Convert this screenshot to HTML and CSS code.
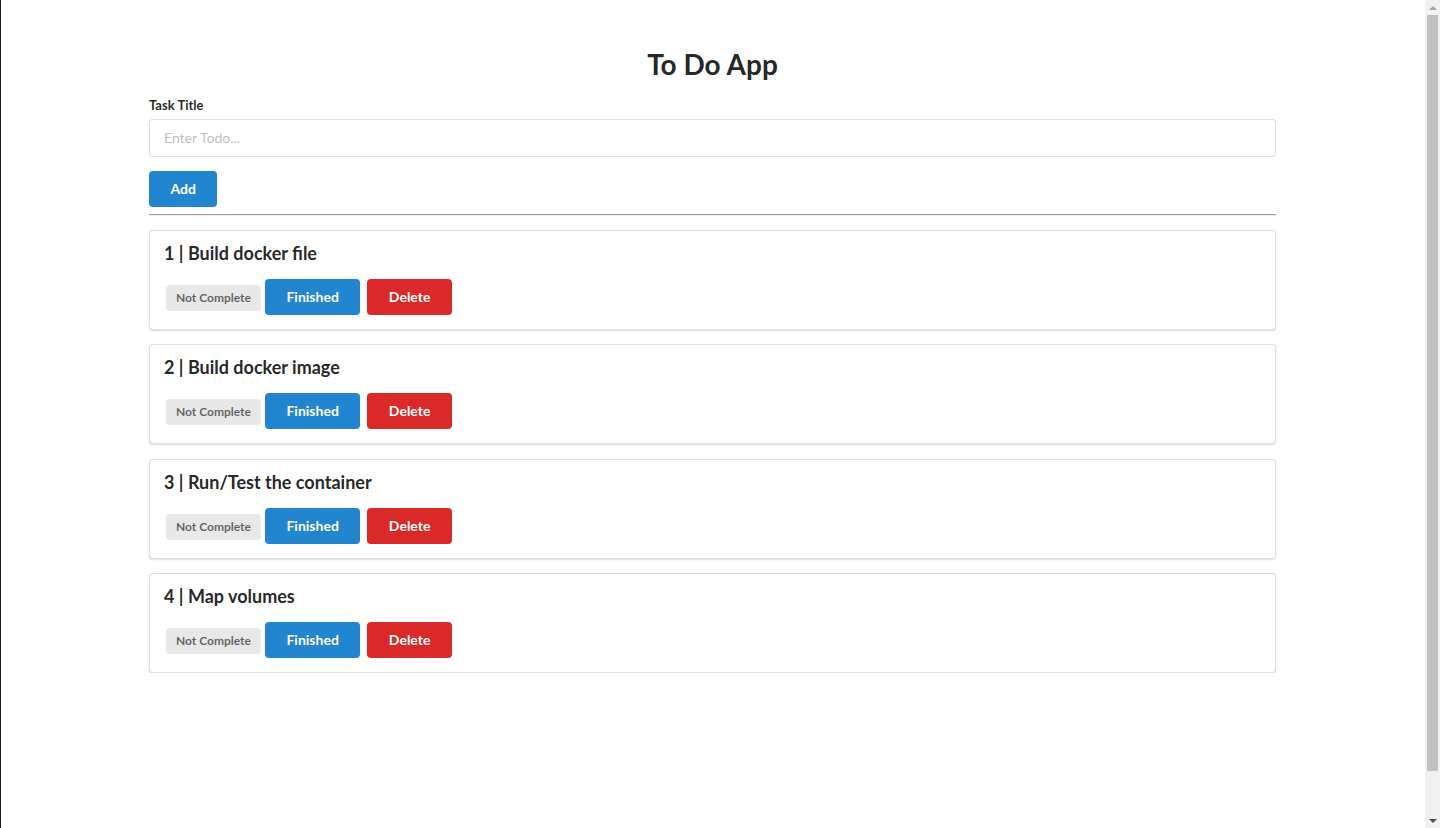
FILE: index.html
```html
<!DOCTYPE html>
<html lang="en">
<head>
<meta charset="utf-8">
<title>To Do App</title>
<link rel="stylesheet" href="styles.css">
</head>
<body>
<div class="container">
  <h1 class="app-title">To Do App</h1>
  <form class="todo-form">
    <label class="field-label" for="task">Task Title</label>
    <input class="text-input" id="task" type="text" placeholder="Enter Todo...">
    <button class="btn btn-blue btn-add" type="button">Add</button>
  </form>
  <hr class="divider">
  <div class="task-list">
    <div class="task-card">
      <h3 class="task-title">1 | Build docker file</h3>
      <div class="task-actions">
        <span class="status-label">Not Complete</span>
        <button class="btn btn-blue" type="button">Finished</button>
        <button class="btn btn-red" type="button">Delete</button>
      </div>
    </div>
    <div class="task-card">
      <h3 class="task-title">2 | Build docker image</h3>
      <div class="task-actions">
        <span class="status-label">Not Complete</span>
        <button class="btn btn-blue" type="button">Finished</button>
        <button class="btn btn-red" type="button">Delete</button>
      </div>
    </div>
    <div class="task-card">
      <h3 class="task-title">3 | Run/Test the container</h3>
      <div class="task-actions">
        <span class="status-label">Not Complete</span>
        <button class="btn btn-blue" type="button">Finished</button>
        <button class="btn btn-red" type="button">Delete</button>
      </div>
    </div>
    <div class="task-card">
      <h3 class="task-title">4 | Map volumes</h3>
      <div class="task-actions">
        <span class="status-label">Not Complete</span>
        <button class="btn btn-blue" type="button">Finished</button>
        <button class="btn btn-red" type="button">Delete</button>
      </div>
    </div>
  </div>
</div>
<div class="scrollbar" aria-hidden="true">
  <div class="scroll-arrow scroll-up"></div>
  <div class="scroll-track"><div class="scroll-thumb"></div></div>
  <div class="scroll-arrow scroll-down"></div>
</div>
</body>
</html>
```

FILE: styles.css
```css
html {
  min-height: 100%;
  box-shadow: inset 1px 0 0 #1e1e1e;
  background: #fff;
}

body {
  margin: 0;
  padding-right: 15px;
  font-family: Lato, "Helvetica Neue", Arial, sans-serif;
  font-size: 14px;
  line-height: 1.4285em;
  color: rgba(0, 0, 0, 0.87);
}

.container {
  width: 1127px;
  margin: 0 auto;
  padding-top: 46px;
}

.app-title {
  margin: 0 0 14px;
  font-size: 28px;
  line-height: 36px;
  font-weight: 700;
  text-align: center;
}

.todo-form {
  display: flex;
  flex-direction: column;
  align-items: flex-start;
}

.field-label {
  display: block;
  margin: 0 0 4px;
  font-size: 13px;
  font-weight: 700;
  line-height: 18.57px;
}

.text-input {
  box-sizing: border-box;
  width: 100%;
  height: 38px;
  margin: 0 0 14px;
  padding: 9.5px 14px;
  font-family: inherit;
  font-size: 14px;
  line-height: 17px;
  color: rgba(0, 0, 0, 0.87);
  border: 1px solid rgba(34, 36, 38, 0.15);
  border-radius: 4px;
  outline: none;
}

.text-input::placeholder {
  color: rgba(180, 180, 180, 0.87);
}

.btn {
  box-sizing: border-box;
  height: 36px;
  margin: 0;
  padding: 11px 21.5px;
  font-family: inherit;
  font-size: 14px;
  font-weight: 700;
  line-height: 14px;
  color: #fff;
  border: none;
  border-radius: 4px;
  cursor: pointer;
}

.btn-blue {
  background: #2185d0;
}

.btn-red {
  background: #db2828;
}

.divider {
  margin: 7px 0 14px;
  border: none;
  border-top: 1px solid #9a9a9a;
  border-bottom: 1px solid #eeeeee;
  height: 0;
}

.task-list {
  display: flex;
  flex-direction: column;
  gap: 14.5px;
}

.task-card {
  padding: 14px;
  border: 1px solid rgba(34, 36, 38, 0.15);
  border-radius: 4px;
  box-shadow: 0 1px 2px 0 rgba(34, 36, 38, 0.15);
  background: #fff;
}

.task-title {
  margin: 0 0 18px;
  font-size: 18px;
  line-height: 16px;
  font-weight: 700;
}

.task-actions {
  display: flex;
  align-items: center;
}

.status-label {
  margin: 2px 4px 0 2px;
  padding: 7px 10px;
  font-size: 12px;
  font-weight: 700;
  line-height: 12px;
  color: rgba(0, 0, 0, 0.6);
  background: #e8e8e8;
  border-radius: 4px;
}

.task-actions .btn-blue {
  margin-right: 7px;
}

/* fake classic scrollbar overlay */
.scrollbar {
  position: fixed;
  top: 0;
  right: 0;
  bottom: 0;
  width: 15px;
  display: flex;
  flex-direction: column;
  background: #f1f1f1;
}

.scroll-arrow {
  height: 15px;
  flex: none;
  display: flex;
  align-items: center;
  justify-content: center;
}

.scroll-arrow::before {
  content: "";
  width: 0;
  height: 0;
  border-left: 4px solid transparent;
  border-right: 4px solid transparent;
}

.scroll-up::before {
  border-bottom: 4px solid #a3a3a3;
}

.scroll-down::before {
  border-top: 4px solid #505050;
}

.scroll-track {
  flex: 1;
  padding: 0 2px;
}

.scroll-thumb {
  height: 756px;
  background: #c1c1c1;
}
```
